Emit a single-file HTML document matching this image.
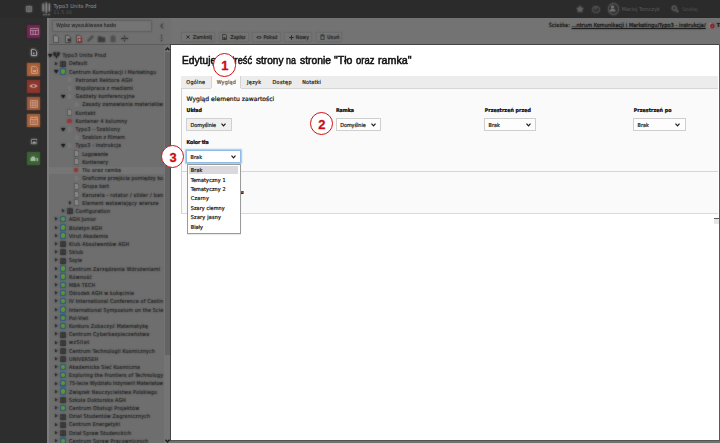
<!DOCTYPE html>
<html lang="pl"><head><meta charset="utf-8"><title>TYPO3 - Tło oraz ramka</title>
<style>
html,body{margin:0;padding:0}
body{width:720px;height:443px;overflow:hidden;position:relative;background:#717171;font-family:"DejaVu Sans","Liberation Sans",sans-serif;font-size:6px;color:#222}
.abs{position:absolute}
.t{position:absolute;white-space:nowrap;-webkit-text-stroke:.24px currentColor}
.t.b0{-webkit-text-stroke:.1px currentColor;text-shadow:0 0 1.700px rgba(20,20,20,.6)}
.t.b1{text-shadow:0 0 1.700px currentColor;-webkit-text-stroke:.08px currentColor;opacity:.85}
.t.b1.tb{text-shadow:0 0 1.700px rgba(120,120,120,.3);-webkit-text-stroke:0;opacity:1}
.lay{position:absolute;left:0;top:0;width:720px;height:443px}
.t.tr{color:rgba(36,36,36,.55) !important;text-shadow:0 0 1.700px rgba(36,36,36,.95);-webkit-text-stroke:.18px rgba(36,36,36,.55)}
.blurI{filter:blur(.85px)}
.circ{position:absolute;border-radius:50%;border-style:solid;border-color:#d10f14;background:#fff}
.sel{position:absolute;background:#efefef;border:1px solid #d0d0d0;border-radius:.5px}
.sel.wh{background:#fdfdfd;border-color:#cfcfcf}
.sel.foc{background:#fff;border-color:#8fbde8;box-shadow:0 0 1.5px .4px rgba(120,175,225,.7)}
.btn{position:absolute;background:#757575;border:1px solid #6a6a6a;border-radius:.5px}
</style></head><body>
<!-- top bar -->
<div class="abs" style="left:0;top:0;width:720px;height:17.8px;background:#2b2b2b"></div>
<!-- module sidebar -->
<div class="abs" style="left:0;top:17.8px;width:47.4px;height:426px;background:#2e2e2e"></div>
<!-- tree header + body -->
<div class="abs" style="left:47.4px;top:17.8px;width:123.4px;height:26.4px;background:#707070"></div>
<div class="abs" style="left:47.4px;top:44.2px;width:123.4px;height:399px;background:#6e6e6e;border-top:.6px solid #5c5c5c"></div>
<div class="abs" style="left:47.400px;top:17.800px;width:1.600px;height:426px;background:#7d7d7d"></div>
<div class="abs" style="left:49px;top:166.600px;width:115px;height:7.800px;background:#757575"></div>
<!-- tree scrollbar -->
<div class="abs" style="left:164px;top:44.6px;width:6.4px;height:399px;background:#747474"></div>
<div class="abs" style="left:164.5px;top:52px;width:5.2px;height:303.300px;background:#636363"></div>
<svg class="abs" style="left:165px;top:46.5px" width="5" height="4" viewBox="0 0 5 4"><path d="M.5 3.2L2.5 1 4.5 3.2" stroke="#1a1a1a" stroke-width="1.300" fill="none"/></svg>
<svg class="abs" style="left:164.600px;top:439px" width="5" height="4" viewBox="0 0 5 4"><path d="M.5 .8L2.5 3 4.5 .8" stroke="#1a1a1a" stroke-width="1.300" fill="none"/></svg>
<!-- doc header -->
<div class="abs" style="left:170.8px;top:17.8px;width:550px;height:27px;background:#737373"></div>

<div class="lay blurI">
<!-- topbar content -->
<svg class="abs" style="left:26px;top:6px" width="6" height="6" viewBox="0 0 6 6"><path d="M.4 .4h5.200v5.200H.4zM2.100 .4v5.200M3.900 .4v5.200" stroke="#8c8c8c" stroke-width=".8" fill="#4a4a4a"/></svg>
<svg class="abs" style="left:41.5px;top:2px" width="9" height="14.500" viewBox="0 0 9 14.500"><path d="M1.100 1.600v8M4.200 .5v10.200M7.300 1.600v8" stroke="#a0a0a0" stroke-width="1.100"/><path d="M2.600 2.500v6.500M5.800 2.500v6.500" stroke="#555" stroke-width=".7"/><path d="M1 12.700h1.600M3.500 12.700h1.600M6 12.700h1.800" stroke="#777" stroke-width="1.300"/></svg>
<svg class="abs" style="left:576px;top:4.8px" width="8" height="8" viewBox="0 0 8 8"><path d="M4 .3l1.1 2.5 2.7.3-2 1.8.6 2.7L4 6.2 1.600 7.600l.6-2.700-2-1.800 2.700-.3z" fill="#646464"/></svg>
<div class="abs" style="left:592.4px;top:5.5px;width:5.6px;height:5.6px;border-radius:50%;border:.6px solid #5a5a5a"></div>
<div class="t" style="left:594.2px;top:5.6px;font-size:4.6px;line-height:6px;color:#5a5a5a;font-weight:bold">?</div>
<div class="abs" style="left:607.8px;top:3.4px;width:9.6px;height:9.6px;border-radius:50%;border:.6px solid #606060;background:#333"></div>
<svg class="abs" style="left:609.4px;top:5px" width="7" height="7" viewBox="0 0 7 7"><circle cx="3.500" cy="2" r="1.700" fill="#777"/><path d="M.4 6.600c0-2 1.400-2.600 3.100-2.600s3.100.6 3.100 2.600z" fill="#777"/></svg>
<svg class="abs" style="left:671px;top:5px" width="8" height="8" viewBox="0 0 8 8"><circle cx="3.200" cy="3.200" r="2.200" stroke="#6a6a6a" stroke-width="1" fill="none"/><path d="M4.900 4.900L7.200 7.200" stroke="#6a6a6a" stroke-width="1.200"/></svg>
<!-- module icons -->
<div class="abs" style="left:27.3px;top:24.7px;width:12.6px;height:13px;background:#702850;box-shadow:0 0 2px rgba(0,0,0,.35)"></div>
<svg class="abs" style="left:29.5px;top:27.5px" width="9" height="8" viewBox="0 0 9 8"><path d="M.5 .5h8v6h-8zM.5 2.500h8M3 2.500v4M5.500 2.500v4" stroke="#b88ca5" stroke-width=".9" fill="none"/></svg>
<svg class="abs" style="left:30.6px;top:49.4px" width="6" height="7" viewBox="0 0 6 7"><path d="M.5 .5h3.200l1.800 1.800v4.200h-5z" fill="#2c2c2c" stroke="#c6c6c6" stroke-width=".9"/><path d="M2 3.600h1.400v1.600H2z" fill="#bbb"/></svg>
<div class="abs" style="left:27.3px;top:63px;width:12.6px;height:13px;background:#aa623a;box-shadow:0 0 2px rgba(0,0,0,.35)"></div>
<svg class="abs" style="left:30.5px;top:65.5px" width="7" height="8" viewBox="0 0 7 8"><path d="M.6 .6h4l1.800 1.800v5h-5.800z" fill="none" stroke="#cfa68e" stroke-width="1"/><path d="M2 4h3v2H2z" fill="#cfa68e"/></svg>
<div class="abs" style="left:27.3px;top:80px;width:12.6px;height:13px;background:#8d362d;box-shadow:0 0 2px rgba(0,0,0,.35)"></div>
<svg class="abs" style="left:29.4px;top:83.4px" width="9" height="6" viewBox="0 0 9 6"><path d="M.4 3C2 .6 7 .6 8.600 3 7 5.400 2 5.400.4 3z" fill="#cdaaa6"/><circle cx="4.500" cy="3" r="1.300" fill="#8d362d"/></svg>
<div class="abs" style="left:27.3px;top:97px;width:12.6px;height:13px;background:#a05b3d;box-shadow:0 0 2px rgba(0,0,0,.35)"></div>
<svg class="abs" style="left:30px;top:99.5px" width="8" height="8" viewBox="0 0 8 8"><path d="M.5 .5h7v7h-7zM.5 2.800h7M.5 5.200h7M2.800 .5v7M5.200 .5v7" stroke="#cfa68e" stroke-width=".8" fill="none"/></svg>
<div class="abs" style="left:27.3px;top:113.8px;width:12.6px;height:13px;background:#aa623a;box-shadow:0 0 2px rgba(0,0,0,.35)"></div>
<svg class="abs" style="left:30px;top:116px" width="8" height="9" viewBox="0 0 8 9"><path d="M.5 1.500h7v7h-7zM.5 3.500h7M2 .2v2M6 .2v2" stroke="#cfa68e" stroke-width=".9" fill="none"/><path d="M2 5h4M2 6.800h4" stroke="#cfa68e" stroke-width=".7"/></svg>
<svg class="abs" style="left:30.600px;top:138.600px" width="6.400" height="5.600" viewBox="0 0 6.400 5.600"><path d="M.4 .5h5.600v4.600H.4z" fill="#222" stroke="#b4b4b4" stroke-width=".8"/><path d="M1 4.600c.6-1.600 1.400-2 2.200-2s1.600.4 2.200 2z" fill="#bdbdbd"/></svg>
<div class="abs" style="left:27.3px;top:152px;width:12.6px;height:13px;background:#3d6236;box-shadow:0 0 2px rgba(0,0,0,.35)"></div>
<svg class="abs" style="left:29.8px;top:155.400px" width="9" height="7" viewBox="0 0 9 7"><path d="M.5 6V3.500L2 1.500h2.500l1 2V6z" fill="#a9bfa5"/><path d="M6.500 3h1.500v3H6.500z" fill="#a9bfa5"/></svg>
<!-- tree header -->
<div class="abs" style="left:52.2px;top:20px;width:97.6px;height:10.200px;background:#747474;border:.6px solid #5e5e5e;border-radius:1px"></div>
<svg class="abs" style="left:159.6px;top:23px" width="4" height="6" viewBox="0 0 4 6"><path d="M3 .6L.8 3 3 5.400" stroke="#2a2a2a" stroke-width=".9" fill="none"/></svg>
<svg class="abs" style="left:53px;top:34.800px" width="6" height="8" viewBox="0 0 6 8"><path d="M.5 .5h3.200l1.800 1.800v5.200h-5z" fill="#8a8a8a" stroke="#3c3c3c" stroke-width=".7"/></svg>
<svg class="abs" style="left:64.8px;top:34.800px" width="6" height="8" viewBox="0 0 6 8"><path d="M.5 .5h3.200l1.800 1.800v5.200h-5z" fill="#8a8a8a" stroke="#333" stroke-width=".7"/><path d="M2.500 3.500h3v3h-3z" fill="#2e2e2e"/></svg>
<svg class="abs" style="left:76.400px;top:34.800px" width="6" height="8" viewBox="0 0 6 8"><path d="M.5 .5h3.200l1.800 1.800v5.200h-5z" fill="#8a8a8a" stroke="#333" stroke-width=".7"/><path d="M1.800 3h3.700v4h-3.700z" fill="#942020"/><path d="M3.650 3.800v2.400M2.450 5h2.400" stroke="#ddd" stroke-width=".7"/></svg>
<svg class="abs" style="left:86.800px;top:35.400px" width="7" height="7" viewBox="0 0 7 7"><path d="M1.400 5.600L3 4M4 3L5.600 1.400" stroke="#484848" stroke-width="1.900" stroke-linecap="round"/><path d="M2.600 4.400L4.400 2.600" stroke="#484848" stroke-width=".8"/></svg>
<svg class="abs" style="left:98px;top:35.600px" width="7" height="6" viewBox="0 0 7 6"><path d="M0 .5h3l.6 1H7V6H0z" fill="#3c3c3c"/></svg>
<svg class="abs" style="left:110.400px;top:35px" width="6" height="7" viewBox="0 0 6 7"><path d="M.3 1.500h5.400M2 .5h2M1 2h4v5H1z" fill="#505050" stroke="#505050" stroke-width=".6"/></svg>
<svg class="abs" style="left:121.400px;top:35px" width="7" height="7" viewBox="0 0 7 7"><path d="M0 3.500h7" stroke="#2a2a2a" stroke-width="1"/><path d="M3.500 .5v1.500M3.500 5v1.500" stroke="#2a2a2a" stroke-width=".9"/></svg>
<div class="abs" style="left:160.800px;top:35px;width:1.100px;height:1.100px;background:#222;box-shadow:0 2.600px 0 #222,0 5.200px 0 #222"></div>
</div>
<div class="lay" style="opacity:.6">
<!-- topbar content -->
<svg class="abs" style="left:26px;top:6px" width="6" height="6" viewBox="0 0 6 6"><path d="M.4 .4h5.200v5.200H.4zM2.100 .4v5.200M3.900 .4v5.200" stroke="#8c8c8c" stroke-width=".8" fill="#4a4a4a"/></svg>
<svg class="abs" style="left:41.5px;top:2px" width="9" height="14.500" viewBox="0 0 9 14.500"><path d="M1.100 1.600v8M4.200 .5v10.200M7.300 1.600v8" stroke="#a0a0a0" stroke-width="1.100"/><path d="M2.600 2.500v6.500M5.800 2.500v6.500" stroke="#555" stroke-width=".7"/><path d="M1 12.700h1.600M3.500 12.700h1.600M6 12.700h1.800" stroke="#777" stroke-width="1.300"/></svg>
<svg class="abs" style="left:576px;top:4.8px" width="8" height="8" viewBox="0 0 8 8"><path d="M4 .3l1.1 2.5 2.7.3-2 1.8.6 2.7L4 6.2 1.600 7.600l.6-2.700-2-1.800 2.700-.3z" fill="#646464"/></svg>
<div class="abs" style="left:592.4px;top:5.5px;width:5.6px;height:5.6px;border-radius:50%;border:.6px solid #5a5a5a"></div>
<div class="t" style="left:594.2px;top:5.6px;font-size:4.6px;line-height:6px;color:#5a5a5a;font-weight:bold">?</div>
<div class="abs" style="left:607.8px;top:3.4px;width:9.6px;height:9.6px;border-radius:50%;border:.6px solid #606060;background:#333"></div>
<svg class="abs" style="left:609.4px;top:5px" width="7" height="7" viewBox="0 0 7 7"><circle cx="3.500" cy="2" r="1.700" fill="#777"/><path d="M.4 6.600c0-2 1.400-2.600 3.100-2.600s3.100.6 3.100 2.600z" fill="#777"/></svg>
<svg class="abs" style="left:671px;top:5px" width="8" height="8" viewBox="0 0 8 8"><circle cx="3.200" cy="3.200" r="2.200" stroke="#6a6a6a" stroke-width="1" fill="none"/><path d="M4.900 4.900L7.200 7.200" stroke="#6a6a6a" stroke-width="1.200"/></svg>
<!-- module icons -->
<div class="abs" style="left:27.3px;top:24.7px;width:12.6px;height:13px;background:#702850;box-shadow:0 0 2px rgba(0,0,0,.35)"></div>
<svg class="abs" style="left:29.5px;top:27.5px" width="9" height="8" viewBox="0 0 9 8"><path d="M.5 .5h8v6h-8zM.5 2.500h8M3 2.500v4M5.500 2.500v4" stroke="#b88ca5" stroke-width=".9" fill="none"/></svg>
<svg class="abs" style="left:30.6px;top:49.4px" width="6" height="7" viewBox="0 0 6 7"><path d="M.5 .5h3.200l1.800 1.800v4.200h-5z" fill="#2c2c2c" stroke="#c6c6c6" stroke-width=".9"/><path d="M2 3.600h1.400v1.600H2z" fill="#bbb"/></svg>
<div class="abs" style="left:27.3px;top:63px;width:12.6px;height:13px;background:#aa623a;box-shadow:0 0 2px rgba(0,0,0,.35)"></div>
<svg class="abs" style="left:30.5px;top:65.5px" width="7" height="8" viewBox="0 0 7 8"><path d="M.6 .6h4l1.800 1.800v5h-5.800z" fill="none" stroke="#cfa68e" stroke-width="1"/><path d="M2 4h3v2H2z" fill="#cfa68e"/></svg>
<div class="abs" style="left:27.3px;top:80px;width:12.6px;height:13px;background:#8d362d;box-shadow:0 0 2px rgba(0,0,0,.35)"></div>
<svg class="abs" style="left:29.4px;top:83.4px" width="9" height="6" viewBox="0 0 9 6"><path d="M.4 3C2 .6 7 .6 8.600 3 7 5.400 2 5.400.4 3z" fill="#cdaaa6"/><circle cx="4.500" cy="3" r="1.300" fill="#8d362d"/></svg>
<div class="abs" style="left:27.3px;top:97px;width:12.6px;height:13px;background:#a05b3d;box-shadow:0 0 2px rgba(0,0,0,.35)"></div>
<svg class="abs" style="left:30px;top:99.5px" width="8" height="8" viewBox="0 0 8 8"><path d="M.5 .5h7v7h-7zM.5 2.800h7M.5 5.200h7M2.800 .5v7M5.200 .5v7" stroke="#cfa68e" stroke-width=".8" fill="none"/></svg>
<div class="abs" style="left:27.3px;top:113.8px;width:12.6px;height:13px;background:#aa623a;box-shadow:0 0 2px rgba(0,0,0,.35)"></div>
<svg class="abs" style="left:30px;top:116px" width="8" height="9" viewBox="0 0 8 9"><path d="M.5 1.500h7v7h-7zM.5 3.500h7M2 .2v2M6 .2v2" stroke="#cfa68e" stroke-width=".9" fill="none"/><path d="M2 5h4M2 6.800h4" stroke="#cfa68e" stroke-width=".7"/></svg>
<svg class="abs" style="left:30.600px;top:138.600px" width="6.400" height="5.600" viewBox="0 0 6.400 5.600"><path d="M.4 .5h5.600v4.600H.4z" fill="#222" stroke="#b4b4b4" stroke-width=".8"/><path d="M1 4.600c.6-1.600 1.400-2 2.200-2s1.600.4 2.200 2z" fill="#bdbdbd"/></svg>
<div class="abs" style="left:27.3px;top:152px;width:12.6px;height:13px;background:#3d6236;box-shadow:0 0 2px rgba(0,0,0,.35)"></div>
<svg class="abs" style="left:29.8px;top:155.400px" width="9" height="7" viewBox="0 0 9 7"><path d="M.5 6V3.500L2 1.500h2.500l1 2V6z" fill="#a9bfa5"/><path d="M6.500 3h1.500v3H6.500z" fill="#a9bfa5"/></svg>
<!-- tree header -->
<div class="abs" style="left:52.2px;top:20px;width:97.6px;height:10.200px;background:#747474;border:.6px solid #5e5e5e;border-radius:1px"></div>
<svg class="abs" style="left:159.6px;top:23px" width="4" height="6" viewBox="0 0 4 6"><path d="M3 .6L.8 3 3 5.400" stroke="#2a2a2a" stroke-width=".9" fill="none"/></svg>
<svg class="abs" style="left:53px;top:34.800px" width="6" height="8" viewBox="0 0 6 8"><path d="M.5 .5h3.200l1.800 1.800v5.200h-5z" fill="#8a8a8a" stroke="#3c3c3c" stroke-width=".7"/></svg>
<svg class="abs" style="left:64.8px;top:34.800px" width="6" height="8" viewBox="0 0 6 8"><path d="M.5 .5h3.200l1.800 1.800v5.200h-5z" fill="#8a8a8a" stroke="#333" stroke-width=".7"/><path d="M2.500 3.500h3v3h-3z" fill="#2e2e2e"/></svg>
<svg class="abs" style="left:76.400px;top:34.800px" width="6" height="8" viewBox="0 0 6 8"><path d="M.5 .5h3.200l1.800 1.800v5.200h-5z" fill="#8a8a8a" stroke="#333" stroke-width=".7"/><path d="M1.800 3h3.700v4h-3.700z" fill="#942020"/><path d="M3.650 3.800v2.400M2.450 5h2.400" stroke="#ddd" stroke-width=".7"/></svg>
<svg class="abs" style="left:86.800px;top:35.400px" width="7" height="7" viewBox="0 0 7 7"><path d="M1.400 5.600L3 4M4 3L5.600 1.400" stroke="#484848" stroke-width="1.900" stroke-linecap="round"/><path d="M2.600 4.400L4.400 2.600" stroke="#484848" stroke-width=".8"/></svg>
<svg class="abs" style="left:98px;top:35.600px" width="7" height="6" viewBox="0 0 7 6"><path d="M0 .5h3l.6 1H7V6H0z" fill="#3c3c3c"/></svg>
<svg class="abs" style="left:110.400px;top:35px" width="6" height="7" viewBox="0 0 6 7"><path d="M.3 1.500h5.400M2 .5h2M1 2h4v5H1z" fill="#505050" stroke="#505050" stroke-width=".6"/></svg>
<svg class="abs" style="left:121.400px;top:35px" width="7" height="7" viewBox="0 0 7 7"><path d="M0 3.500h7" stroke="#2a2a2a" stroke-width="1"/><path d="M3.500 .5v1.500M3.500 5v1.500" stroke="#2a2a2a" stroke-width=".9"/></svg>
<div class="abs" style="left:160.800px;top:35px;width:1.100px;height:1.100px;background:#222;box-shadow:0 2.600px 0 #222,0 5.200px 0 #222"></div>
</div>
<div class="lay">
<div class="t b1" style='left:56.3px;top:22.00px;font-size:5.2px;line-height:6.76px;letter-spacing:-0.01px;color:#2a2a2a;font-family:"DejaVu Sans Condensed","DejaVu Sans","Liberation Sans",sans-serif;'>Wpisz wyszukiwane hasło</div>
<div class="t b1 tb" style='left:53.5px;top:2.80px;font-size:5.5px;line-height:7.15px;letter-spacing:0.12px;color:#8c8c8c;font-family:"DejaVu Sans Condensed","DejaVu Sans","Liberation Sans",sans-serif;'>Typo3 Units Prod</div>
<div class="t b1 tb" style='left:53.5px;top:8.50px;font-size:5.2px;line-height:6.76px;letter-spacing:0.10px;color:#4c4c4c;font-family:"DejaVu Sans Condensed","DejaVu Sans","Liberation Sans",sans-serif;'>11.5.30</div>
<div class="t b1 tb" style='left:621.7px;top:5.70px;font-size:5.5px;line-height:7.15px;letter-spacing:-0.01px;color:#525252;font-family:"DejaVu Sans Condensed","DejaVu Sans","Liberation Sans",sans-serif;'>Maciej Tomczyk</div>
<div class="t b1 tb" style='left:682.0px;top:5.70px;font-size:5.5px;line-height:7.15px;letter-spacing:-0.11px;color:#454545;font-family:"DejaVu Sans Condensed","DejaVu Sans","Liberation Sans",sans-serif;'>Szukaj</div>
</div>

<div class="lay blurI">
<svg class="abs" style="left:47.8px;top:53.7px" width="4.4" height="3.6" viewBox="0 0 4.4 3.6"><path d="M0 0h4.4L2.2 3.6z" fill="#1a1a1a"/></svg>
<svg class="abs" style="left:52.8px;top:51.8px" width="7" height="7" viewBox="0 0 7 7"><path d="M.8 .8h1.800v1.800H.8zM4.400 .8h1.800v1.800H4.400zM1.700 2.600v1.400h1.800V6.200M5.300 2.600v1.400H3.500" stroke="#222" stroke-width="1" fill="none"/></svg>
<svg class="abs" style="left:55.4px;top:61.5px" width="2.700" height="3.600" viewBox="0 0 3 4"><path d="M0 0v4L3 2z" fill="#2c2c2c"/></svg>
<svg class="abs" style="left:59.9px;top:60.7px" width="6" height="6" viewBox="0 0 6 6"><path d="M.3 .8h5.400M.8 1v4.500M2.400 1v4.500M4 1v4.500M5.300 1v4.500M.3 5.300h5.400" stroke="#2c2c2c" stroke-width=".9" fill="none"/></svg>
<svg class="abs" style="left:54.4px;top:70.1px" width="4.4" height="3.6" viewBox="0 0 4.4 3.6"><path d="M0 0h4.4L2.2 3.6z" fill="#1a1a1a"/></svg>
<div class="abs" style="left:59.6px;top:68.2px;width:6.6px;height:6.6px;border-radius:1.6px;background:#3a5a7c"></div><div class="abs" style="left:60.7px;top:69.3px;width:4.4px;height:4.4px;border-radius:50%;background:#5c9a2e"></div>
<svg class="abs" style="left:66.9px;top:76.3px" width="5.2" height="6.8" viewBox="0 0 5.200 6.800"><path d="M.4 .4h2.800l1.600 1.600v4.400H.4z" fill="#767676" stroke="#676767" stroke-width=".4"/></svg>
<svg class="abs" style="left:66.9px;top:84.5px" width="5.2" height="6.8" viewBox="0 0 5.200 6.800"><path d="M.4 .4h2.800l1.600 1.600v4.400H.4z" fill="#767676" stroke="#676767" stroke-width=".4"/></svg>
<svg class="abs" style="left:61.0px;top:94.7px" width="4.4" height="3.6" viewBox="0 0 4.4 3.6"><path d="M0 0h4.4L2.2 3.6z" fill="#1a1a1a"/></svg>
<svg class="abs" style="left:66.9px;top:92.7px" width="5.2" height="6.8" viewBox="0 0 5.200 6.800"><path d="M.4 .4h2.800l1.600 1.600v4.400H.4z" fill="#767676" stroke="#676767" stroke-width=".4"/></svg>
<svg class="abs" style="left:73.5px;top:100.9px" width="5.2" height="6.8" viewBox="0 0 5.200 6.800"><path d="M.4 .4h2.800l1.600 1.600v4.400H.4z" fill="#767676" stroke="#676767" stroke-width=".4"/></svg>
<svg class="abs" style="left:66.9px;top:109.1px" width="5.2" height="6.8" viewBox="0 0 5.200 6.800"><path d="M.4 .4h2.800l1.600 1.600v4.400H.4z" fill="#868686" stroke="#444" stroke-width=".6"/></svg>
<div class="abs" style="left:67.2px;top:118.8px;width:4.4px;height:4.4px;border-radius:50%;background:#943636"></div>
<svg class="abs" style="left:61.0px;top:127.5px" width="4.4" height="3.6" viewBox="0 0 4.4 3.6"><path d="M0 0h4.4L2.2 3.6z" fill="#1a1a1a"/></svg>
<svg class="abs" style="left:66.9px;top:125.5px" width="5.2" height="6.8" viewBox="0 0 5.200 6.800"><path d="M.4 .4h2.800l1.600 1.600v4.400H.4z" fill="#767676" stroke="#676767" stroke-width=".4"/></svg>
<svg class="abs" style="left:73.5px;top:133.8px" width="5.2" height="6.8" viewBox="0 0 5.200 6.800"><path d="M.4 .4h2.800l1.600 1.600v4.400H.4z" fill="#767676" stroke="#676767" stroke-width=".4"/></svg>
<svg class="abs" style="left:61.0px;top:144.0px" width="4.4" height="3.6" viewBox="0 0 4.4 3.6"><path d="M0 0h4.4L2.2 3.6z" fill="#1a1a1a"/></svg>
<svg class="abs" style="left:66.9px;top:142.0px" width="5.2" height="6.8" viewBox="0 0 5.200 6.800"><path d="M.4 .4h2.800l1.600 1.600v4.400H.4z" fill="#767676" stroke="#676767" stroke-width=".4"/></svg>
<svg class="abs" style="left:73.5px;top:150.2px" width="5.2" height="6.8" viewBox="0 0 5.200 6.800"><path d="M.4 .4h2.800l1.600 1.600v4.400H.4z" fill="#868686" stroke="#444" stroke-width=".6"/></svg>
<svg class="abs" style="left:73.5px;top:158.4px" width="5.2" height="6.8" viewBox="0 0 5.200 6.800"><path d="M.4 .4h2.800l1.600 1.600v4.400H.4z" fill="#868686" stroke="#444" stroke-width=".6"/></svg>
<div class="abs" style="left:73.8px;top:168.1px;width:4.4px;height:4.4px;border-radius:50%;background:#943636"></div>
<svg class="abs" style="left:73.5px;top:174.8px" width="5.2" height="6.8" viewBox="0 0 5.200 6.800"><path d="M.4 .4h2.800l1.600 1.600v4.400H.4z" fill="#767676" stroke="#676767" stroke-width=".4"/></svg>
<svg class="abs" style="left:73.5px;top:183.0px" width="5.2" height="6.8" viewBox="0 0 5.200 6.800"><path d="M.4 .4h2.800l1.600 1.600v4.400H.4z" fill="#868686" stroke="#444" stroke-width=".6"/></svg>
<svg class="abs" style="left:73.5px;top:191.2px" width="5.2" height="6.8" viewBox="0 0 5.200 6.800"><path d="M.4 .4h2.800l1.600 1.600v4.400H.4z" fill="#868686" stroke="#444" stroke-width=".6"/></svg>
<svg class="abs" style="left:68.6px;top:201.0px" width="2.700" height="3.600" viewBox="0 0 3 4"><path d="M0 0v4L3 2z" fill="#2c2c2c"/></svg>
<svg class="abs" style="left:73.5px;top:199.4px" width="5.2" height="6.8" viewBox="0 0 5.200 6.800"><path d="M.4 .4h2.800l1.600 1.600v4.400H.4z" fill="#868686" stroke="#444" stroke-width=".6"/></svg>
<svg class="abs" style="left:62.0px;top:209.2px" width="2.700" height="3.600" viewBox="0 0 3 4"><path d="M0 0v4L3 2z" fill="#2c2c2c"/></svg>
<svg class="abs" style="left:66.5px;top:208.4px" width="6" height="6" viewBox="0 0 6 6"><path d="M.3 .8h5.400M.8 1v4.500M2.400 1v4.500M4 1v4.500M5.300 1v4.500M.3 5.300h5.400" stroke="#2c2c2c" stroke-width=".9" fill="none"/></svg>
<svg class="abs" style="left:55.4px;top:217.4px" width="2.700" height="3.600" viewBox="0 0 3 4"><path d="M0 0v4L3 2z" fill="#2c2c2c"/></svg>
<div class="abs" style="left:59.6px;top:215.9px;width:6.6px;height:6.6px;border-radius:1.6px;background:#3a5a7c"></div><div class="abs" style="left:60.7px;top:217.0px;width:4.4px;height:4.4px;border-radius:50%;background:#5c9a2e"></div>
<svg class="abs" style="left:55.4px;top:225.6px" width="2.700" height="3.600" viewBox="0 0 3 4"><path d="M0 0v4L3 2z" fill="#2c2c2c"/></svg>
<div class="abs" style="left:59.6px;top:224.1px;width:6.6px;height:6.6px;border-radius:1.6px;background:#3a5a7c"></div><div class="abs" style="left:60.7px;top:225.2px;width:4.4px;height:4.4px;border-radius:50%;background:#5c9a2e"></div>
<svg class="abs" style="left:55.4px;top:233.8px" width="2.700" height="3.600" viewBox="0 0 3 4"><path d="M0 0v4L3 2z" fill="#2c2c2c"/></svg>
<div class="abs" style="left:59.6px;top:232.3px;width:6.6px;height:6.6px;border-radius:1.6px;background:#3a5a7c"></div><div class="abs" style="left:60.7px;top:233.4px;width:4.4px;height:4.4px;border-radius:50%;background:#5c9a2e"></div>
<svg class="abs" style="left:55.4px;top:242.0px" width="2.700" height="3.600" viewBox="0 0 3 4"><path d="M0 0v4L3 2z" fill="#2c2c2c"/></svg>
<svg class="abs" style="left:59.9px;top:241.2px" width="6" height="6" viewBox="0 0 6 6"><path d="M.3 .8h5.400M.8 1v4.500M2.400 1v4.500M4 1v4.500M5.300 1v4.500M.3 5.300h5.400" stroke="#2c2c2c" stroke-width=".9" fill="none"/></svg>
<svg class="abs" style="left:55.4px;top:250.2px" width="2.700" height="3.600" viewBox="0 0 3 4"><path d="M0 0v4L3 2z" fill="#2c2c2c"/></svg>
<svg class="abs" style="left:59.9px;top:249.4px" width="6" height="6" viewBox="0 0 6 6"><path d="M.3 .8h5.400M.8 1v4.500M2.400 1v4.500M4 1v4.500M5.300 1v4.500M.3 5.300h5.400" stroke="#2c2c2c" stroke-width=".9" fill="none"/></svg>
<svg class="abs" style="left:55.4px;top:258.4px" width="2.700" height="3.600" viewBox="0 0 3 4"><path d="M0 0v4L3 2z" fill="#2c2c2c"/></svg>
<svg class="abs" style="left:59.9px;top:257.6px" width="6" height="6" viewBox="0 0 6 6"><path d="M.3 .8h5.400M.8 1v4.500M2.400 1v4.500M4 1v4.500M5.300 1v4.500M.3 5.300h5.400" stroke="#2c2c2c" stroke-width=".9" fill="none"/></svg>
<svg class="abs" style="left:55.4px;top:266.6px" width="2.700" height="3.600" viewBox="0 0 3 4"><path d="M0 0v4L3 2z" fill="#2c2c2c"/></svg>
<div class="abs" style="left:59.6px;top:265.1px;width:6.6px;height:6.6px;border-radius:1.6px;background:#3a5a7c"></div><div class="abs" style="left:60.7px;top:266.2px;width:4.4px;height:4.4px;border-radius:50%;background:#5c9a2e"></div>
<svg class="abs" style="left:55.4px;top:274.8px" width="2.700" height="3.600" viewBox="0 0 3 4"><path d="M0 0v4L3 2z" fill="#2c2c2c"/></svg>
<div class="abs" style="left:59.6px;top:273.3px;width:6.6px;height:6.6px;border-radius:1.6px;background:#3a5a7c"></div><div class="abs" style="left:60.7px;top:274.4px;width:4.4px;height:4.4px;border-radius:50%;background:#5c9a2e"></div>
<svg class="abs" style="left:55.4px;top:283.0px" width="2.700" height="3.600" viewBox="0 0 3 4"><path d="M0 0v4L3 2z" fill="#2c2c2c"/></svg>
<div class="abs" style="left:59.6px;top:281.5px;width:6.6px;height:6.6px;border-radius:1.6px;background:#3a5a7c"></div><div class="abs" style="left:60.7px;top:282.6px;width:4.4px;height:4.4px;border-radius:50%;background:#5c9a2e"></div>
<svg class="abs" style="left:55.4px;top:291.2px" width="2.700" height="3.600" viewBox="0 0 3 4"><path d="M0 0v4L3 2z" fill="#2c2c2c"/></svg>
<div class="abs" style="left:59.6px;top:289.7px;width:6.6px;height:6.6px;border-radius:1.6px;background:#3a5a7c"></div><div class="abs" style="left:60.7px;top:290.8px;width:4.4px;height:4.4px;border-radius:50%;background:#5c9a2e"></div>
<svg class="abs" style="left:55.4px;top:299.4px" width="2.700" height="3.600" viewBox="0 0 3 4"><path d="M0 0v4L3 2z" fill="#2c2c2c"/></svg>
<div class="abs" style="left:59.6px;top:297.9px;width:6.6px;height:6.6px;border-radius:1.6px;background:#3a5a7c"></div><div class="abs" style="left:60.7px;top:299.1px;width:4.4px;height:4.4px;border-radius:50%;background:#5c9a2e"></div>
<svg class="abs" style="left:55.4px;top:307.7px" width="2.700" height="3.600" viewBox="0 0 3 4"><path d="M0 0v4L3 2z" fill="#2c2c2c"/></svg>
<div class="abs" style="left:59.6px;top:306.2px;width:6.6px;height:6.6px;border-radius:1.6px;background:#3a5a7c"></div><div class="abs" style="left:60.7px;top:307.3px;width:4.4px;height:4.4px;border-radius:50%;background:#5c9a2e"></div>
<svg class="abs" style="left:55.4px;top:315.9px" width="2.700" height="3.600" viewBox="0 0 3 4"><path d="M0 0v4L3 2z" fill="#2c2c2c"/></svg>
<div class="abs" style="left:59.6px;top:314.4px;width:6.6px;height:6.6px;border-radius:1.6px;background:#3a5a7c"></div><div class="abs" style="left:60.7px;top:315.5px;width:4.4px;height:4.4px;border-radius:50%;background:#5c9a2e"></div>
<svg class="abs" style="left:55.4px;top:324.1px" width="2.700" height="3.600" viewBox="0 0 3 4"><path d="M0 0v4L3 2z" fill="#2c2c2c"/></svg>
<div class="abs" style="left:59.6px;top:322.6px;width:6.6px;height:6.6px;border-radius:1.6px;background:#3a5a7c"></div><div class="abs" style="left:60.7px;top:323.7px;width:4.4px;height:4.4px;border-radius:50%;background:#5c9a2e"></div>
<svg class="abs" style="left:55.4px;top:332.3px" width="2.700" height="3.600" viewBox="0 0 3 4"><path d="M0 0v4L3 2z" fill="#2c2c2c"/></svg>
<svg class="abs" style="left:59.9px;top:331.5px" width="6" height="6" viewBox="0 0 6 6"><path d="M.3 .8h5.400M.8 1v4.500M2.400 1v4.500M4 1v4.500M5.300 1v4.500M.3 5.300h5.400" stroke="#2c2c2c" stroke-width=".9" fill="none"/></svg>
<svg class="abs" style="left:55.4px;top:340.5px" width="2.700" height="3.600" viewBox="0 0 3 4"><path d="M0 0v4L3 2z" fill="#2c2c2c"/></svg>
<svg class="abs" style="left:59.9px;top:339.7px" width="6" height="6" viewBox="0 0 6 6"><path d="M.3 .8h5.400M.8 1v4.500M2.400 1v4.500M4 1v4.500M5.300 1v4.500M.3 5.300h5.400" stroke="#2c2c2c" stroke-width=".9" fill="none"/></svg>
<svg class="abs" style="left:55.4px;top:348.7px" width="2.700" height="3.600" viewBox="0 0 3 4"><path d="M0 0v4L3 2z" fill="#2c2c2c"/></svg>
<svg class="abs" style="left:59.9px;top:347.9px" width="6" height="6" viewBox="0 0 6 6"><path d="M.3 .8h5.400M.8 1v4.500M2.400 1v4.500M4 1v4.500M5.300 1v4.500M.3 5.300h5.400" stroke="#2c2c2c" stroke-width=".9" fill="none"/></svg>
<svg class="abs" style="left:55.4px;top:356.9px" width="2.700" height="3.600" viewBox="0 0 3 4"><path d="M0 0v4L3 2z" fill="#2c2c2c"/></svg>
<svg class="abs" style="left:59.9px;top:356.1px" width="6" height="6" viewBox="0 0 6 6"><path d="M.3 .8h5.400M.8 1v4.500M2.400 1v4.500M4 1v4.500M5.300 1v4.500M.3 5.300h5.400" stroke="#2c2c2c" stroke-width=".9" fill="none"/></svg>
<svg class="abs" style="left:55.4px;top:365.1px" width="2.700" height="3.600" viewBox="0 0 3 4"><path d="M0 0v4L3 2z" fill="#2c2c2c"/></svg>
<div class="abs" style="left:59.6px;top:363.6px;width:6.6px;height:6.6px;border-radius:1.6px;background:#3a5a7c"></div><div class="abs" style="left:60.7px;top:364.7px;width:4.4px;height:4.4px;border-radius:50%;background:#5c9a2e"></div>
<svg class="abs" style="left:55.4px;top:373.3px" width="2.700" height="3.600" viewBox="0 0 3 4"><path d="M0 0v4L3 2z" fill="#2c2c2c"/></svg>
<div class="abs" style="left:59.6px;top:371.8px;width:6.6px;height:6.6px;border-radius:1.6px;background:#3a5a7c"></div><div class="abs" style="left:60.7px;top:372.9px;width:4.4px;height:4.4px;border-radius:50%;background:#5c9a2e"></div>
<svg class="abs" style="left:55.4px;top:381.5px" width="2.700" height="3.600" viewBox="0 0 3 4"><path d="M0 0v4L3 2z" fill="#2c2c2c"/></svg>
<div class="abs" style="left:59.6px;top:380.0px;width:6.6px;height:6.6px;border-radius:1.6px;background:#3a5a7c"></div><div class="abs" style="left:60.7px;top:381.1px;width:4.4px;height:4.4px;border-radius:50%;background:#5c9a2e"></div>
<svg class="abs" style="left:55.4px;top:389.7px" width="2.700" height="3.600" viewBox="0 0 3 4"><path d="M0 0v4L3 2z" fill="#2c2c2c"/></svg>
<div class="abs" style="left:59.6px;top:388.2px;width:6.6px;height:6.6px;border-radius:1.6px;background:#3a5a7c"></div><div class="abs" style="left:60.7px;top:389.3px;width:4.4px;height:4.4px;border-radius:50%;background:#5c9a2e"></div>
<svg class="abs" style="left:55.4px;top:397.9px" width="2.700" height="3.600" viewBox="0 0 3 4"><path d="M0 0v4L3 2z" fill="#2c2c2c"/></svg>
<svg class="abs" style="left:59.9px;top:397.1px" width="6" height="6" viewBox="0 0 6 6"><path d="M.3 .8h5.400M.8 1v4.500M2.400 1v4.500M4 1v4.500M5.300 1v4.500M.3 5.300h5.400" stroke="#2c2c2c" stroke-width=".9" fill="none"/></svg>
<svg class="abs" style="left:55.4px;top:406.1px" width="2.700" height="3.600" viewBox="0 0 3 4"><path d="M0 0v4L3 2z" fill="#2c2c2c"/></svg>
<div class="abs" style="left:59.6px;top:404.6px;width:6.6px;height:6.6px;border-radius:1.6px;background:#3a5a7c"></div><div class="abs" style="left:60.7px;top:405.7px;width:4.4px;height:4.4px;border-radius:50%;background:#5c9a2e"></div>
<svg class="abs" style="left:55.4px;top:414.3px" width="2.700" height="3.600" viewBox="0 0 3 4"><path d="M0 0v4L3 2z" fill="#2c2c2c"/></svg>
<svg class="abs" style="left:59.9px;top:413.5px" width="6" height="6" viewBox="0 0 6 6"><path d="M.3 .8h5.400M.8 1v4.500M2.400 1v4.500M4 1v4.500M5.300 1v4.500M.3 5.300h5.400" stroke="#2c2c2c" stroke-width=".9" fill="none"/></svg>
<svg class="abs" style="left:55.4px;top:422.5px" width="2.700" height="3.600" viewBox="0 0 3 4"><path d="M0 0v4L3 2z" fill="#2c2c2c"/></svg>
<svg class="abs" style="left:59.9px;top:421.7px" width="6" height="6" viewBox="0 0 6 6"><path d="M.3 .8h5.400M.8 1v4.500M2.400 1v4.500M4 1v4.500M5.300 1v4.500M.3 5.300h5.400" stroke="#2c2c2c" stroke-width=".9" fill="none"/></svg>
<svg class="abs" style="left:55.4px;top:430.7px" width="2.700" height="3.600" viewBox="0 0 3 4"><path d="M0 0v4L3 2z" fill="#2c2c2c"/></svg>
<svg class="abs" style="left:59.9px;top:429.9px" width="6" height="6" viewBox="0 0 6 6"><path d="M.3 .8h5.400M.8 1v4.500M2.400 1v4.500M4 1v4.500M5.300 1v4.500M.3 5.300h5.400" stroke="#2c2c2c" stroke-width=".9" fill="none"/></svg>
<svg class="abs" style="left:55.4px;top:438.9px" width="2.700" height="3.600" viewBox="0 0 3 4"><path d="M0 0v4L3 2z" fill="#2c2c2c"/></svg>
<div class="abs" style="left:59.6px;top:437.4px;width:6.6px;height:6.6px;border-radius:1.6px;background:#3a5a7c"></div><div class="abs" style="left:60.7px;top:438.5px;width:4.4px;height:4.4px;border-radius:50%;background:#5c9a2e"></div>
</div>
<div class="lay" style="opacity:.8">
<svg class="abs" style="left:47.8px;top:53.7px" width="4.4" height="3.6" viewBox="0 0 4.4 3.6"><path d="M0 0h4.4L2.2 3.6z" fill="#1a1a1a"/></svg>
<svg class="abs" style="left:52.8px;top:51.8px" width="7" height="7" viewBox="0 0 7 7"><path d="M.8 .8h1.800v1.800H.8zM4.400 .8h1.800v1.800H4.400zM1.700 2.600v1.400h1.800V6.200M5.300 2.600v1.400H3.500" stroke="#222" stroke-width="1" fill="none"/></svg>
<svg class="abs" style="left:55.4px;top:61.5px" width="2.700" height="3.600" viewBox="0 0 3 4"><path d="M0 0v4L3 2z" fill="#2c2c2c"/></svg>
<svg class="abs" style="left:59.9px;top:60.7px" width="6" height="6" viewBox="0 0 6 6"><path d="M.3 .8h5.400M.8 1v4.500M2.400 1v4.500M4 1v4.500M5.300 1v4.500M.3 5.300h5.400" stroke="#2c2c2c" stroke-width=".9" fill="none"/></svg>
<svg class="abs" style="left:54.4px;top:70.1px" width="4.4" height="3.6" viewBox="0 0 4.4 3.6"><path d="M0 0h4.4L2.2 3.6z" fill="#1a1a1a"/></svg>
<div class="abs" style="left:59.6px;top:68.2px;width:6.6px;height:6.6px;border-radius:1.6px;background:#3a5a7c"></div><div class="abs" style="left:60.7px;top:69.3px;width:4.4px;height:4.4px;border-radius:50%;background:#5c9a2e"></div>
<svg class="abs" style="left:66.9px;top:76.3px" width="5.2" height="6.8" viewBox="0 0 5.200 6.800"><path d="M.4 .4h2.800l1.600 1.600v4.400H.4z" fill="#767676" stroke="#676767" stroke-width=".4"/></svg>
<svg class="abs" style="left:66.9px;top:84.5px" width="5.2" height="6.8" viewBox="0 0 5.200 6.800"><path d="M.4 .4h2.800l1.600 1.600v4.400H.4z" fill="#767676" stroke="#676767" stroke-width=".4"/></svg>
<svg class="abs" style="left:61.0px;top:94.7px" width="4.4" height="3.6" viewBox="0 0 4.4 3.6"><path d="M0 0h4.4L2.2 3.6z" fill="#1a1a1a"/></svg>
<svg class="abs" style="left:66.9px;top:92.7px" width="5.2" height="6.8" viewBox="0 0 5.200 6.800"><path d="M.4 .4h2.800l1.600 1.600v4.400H.4z" fill="#767676" stroke="#676767" stroke-width=".4"/></svg>
<svg class="abs" style="left:73.5px;top:100.9px" width="5.2" height="6.8" viewBox="0 0 5.200 6.800"><path d="M.4 .4h2.800l1.600 1.600v4.400H.4z" fill="#767676" stroke="#676767" stroke-width=".4"/></svg>
<svg class="abs" style="left:66.9px;top:109.1px" width="5.2" height="6.8" viewBox="0 0 5.200 6.800"><path d="M.4 .4h2.800l1.600 1.600v4.400H.4z" fill="#868686" stroke="#444" stroke-width=".6"/></svg>
<div class="abs" style="left:67.2px;top:118.8px;width:4.4px;height:4.4px;border-radius:50%;background:#943636"></div>
<svg class="abs" style="left:61.0px;top:127.5px" width="4.4" height="3.6" viewBox="0 0 4.4 3.6"><path d="M0 0h4.4L2.2 3.6z" fill="#1a1a1a"/></svg>
<svg class="abs" style="left:66.9px;top:125.5px" width="5.2" height="6.8" viewBox="0 0 5.200 6.800"><path d="M.4 .4h2.800l1.600 1.600v4.400H.4z" fill="#767676" stroke="#676767" stroke-width=".4"/></svg>
<svg class="abs" style="left:73.5px;top:133.8px" width="5.2" height="6.8" viewBox="0 0 5.200 6.800"><path d="M.4 .4h2.800l1.600 1.600v4.400H.4z" fill="#767676" stroke="#676767" stroke-width=".4"/></svg>
<svg class="abs" style="left:61.0px;top:144.0px" width="4.4" height="3.6" viewBox="0 0 4.4 3.6"><path d="M0 0h4.4L2.2 3.6z" fill="#1a1a1a"/></svg>
<svg class="abs" style="left:66.9px;top:142.0px" width="5.2" height="6.8" viewBox="0 0 5.200 6.800"><path d="M.4 .4h2.800l1.600 1.600v4.400H.4z" fill="#767676" stroke="#676767" stroke-width=".4"/></svg>
<svg class="abs" style="left:73.5px;top:150.2px" width="5.2" height="6.8" viewBox="0 0 5.200 6.800"><path d="M.4 .4h2.800l1.600 1.600v4.400H.4z" fill="#868686" stroke="#444" stroke-width=".6"/></svg>
<svg class="abs" style="left:73.5px;top:158.4px" width="5.2" height="6.8" viewBox="0 0 5.200 6.800"><path d="M.4 .4h2.800l1.600 1.600v4.400H.4z" fill="#868686" stroke="#444" stroke-width=".6"/></svg>
<div class="abs" style="left:73.8px;top:168.1px;width:4.4px;height:4.4px;border-radius:50%;background:#943636"></div>
<svg class="abs" style="left:73.5px;top:174.8px" width="5.2" height="6.8" viewBox="0 0 5.200 6.800"><path d="M.4 .4h2.800l1.600 1.600v4.400H.4z" fill="#767676" stroke="#676767" stroke-width=".4"/></svg>
<svg class="abs" style="left:73.5px;top:183.0px" width="5.2" height="6.8" viewBox="0 0 5.200 6.800"><path d="M.4 .4h2.800l1.600 1.600v4.400H.4z" fill="#868686" stroke="#444" stroke-width=".6"/></svg>
<svg class="abs" style="left:73.5px;top:191.2px" width="5.2" height="6.8" viewBox="0 0 5.200 6.800"><path d="M.4 .4h2.800l1.600 1.600v4.400H.4z" fill="#868686" stroke="#444" stroke-width=".6"/></svg>
<svg class="abs" style="left:68.6px;top:201.0px" width="2.700" height="3.600" viewBox="0 0 3 4"><path d="M0 0v4L3 2z" fill="#2c2c2c"/></svg>
<svg class="abs" style="left:73.5px;top:199.4px" width="5.2" height="6.8" viewBox="0 0 5.200 6.800"><path d="M.4 .4h2.800l1.600 1.600v4.400H.4z" fill="#868686" stroke="#444" stroke-width=".6"/></svg>
<svg class="abs" style="left:62.0px;top:209.2px" width="2.700" height="3.600" viewBox="0 0 3 4"><path d="M0 0v4L3 2z" fill="#2c2c2c"/></svg>
<svg class="abs" style="left:66.5px;top:208.4px" width="6" height="6" viewBox="0 0 6 6"><path d="M.3 .8h5.400M.8 1v4.500M2.400 1v4.500M4 1v4.500M5.300 1v4.500M.3 5.300h5.400" stroke="#2c2c2c" stroke-width=".9" fill="none"/></svg>
<svg class="abs" style="left:55.4px;top:217.4px" width="2.700" height="3.600" viewBox="0 0 3 4"><path d="M0 0v4L3 2z" fill="#2c2c2c"/></svg>
<div class="abs" style="left:59.6px;top:215.9px;width:6.6px;height:6.6px;border-radius:1.6px;background:#3a5a7c"></div><div class="abs" style="left:60.7px;top:217.0px;width:4.4px;height:4.4px;border-radius:50%;background:#5c9a2e"></div>
<svg class="abs" style="left:55.4px;top:225.6px" width="2.700" height="3.600" viewBox="0 0 3 4"><path d="M0 0v4L3 2z" fill="#2c2c2c"/></svg>
<div class="abs" style="left:59.6px;top:224.1px;width:6.6px;height:6.6px;border-radius:1.6px;background:#3a5a7c"></div><div class="abs" style="left:60.7px;top:225.2px;width:4.4px;height:4.4px;border-radius:50%;background:#5c9a2e"></div>
<svg class="abs" style="left:55.4px;top:233.8px" width="2.700" height="3.600" viewBox="0 0 3 4"><path d="M0 0v4L3 2z" fill="#2c2c2c"/></svg>
<div class="abs" style="left:59.6px;top:232.3px;width:6.6px;height:6.6px;border-radius:1.6px;background:#3a5a7c"></div><div class="abs" style="left:60.7px;top:233.4px;width:4.4px;height:4.4px;border-radius:50%;background:#5c9a2e"></div>
<svg class="abs" style="left:55.4px;top:242.0px" width="2.700" height="3.600" viewBox="0 0 3 4"><path d="M0 0v4L3 2z" fill="#2c2c2c"/></svg>
<svg class="abs" style="left:59.9px;top:241.2px" width="6" height="6" viewBox="0 0 6 6"><path d="M.3 .8h5.400M.8 1v4.500M2.400 1v4.500M4 1v4.500M5.300 1v4.500M.3 5.300h5.400" stroke="#2c2c2c" stroke-width=".9" fill="none"/></svg>
<svg class="abs" style="left:55.4px;top:250.2px" width="2.700" height="3.600" viewBox="0 0 3 4"><path d="M0 0v4L3 2z" fill="#2c2c2c"/></svg>
<svg class="abs" style="left:59.9px;top:249.4px" width="6" height="6" viewBox="0 0 6 6"><path d="M.3 .8h5.400M.8 1v4.500M2.400 1v4.500M4 1v4.500M5.300 1v4.500M.3 5.300h5.400" stroke="#2c2c2c" stroke-width=".9" fill="none"/></svg>
<svg class="abs" style="left:55.4px;top:258.4px" width="2.700" height="3.600" viewBox="0 0 3 4"><path d="M0 0v4L3 2z" fill="#2c2c2c"/></svg>
<svg class="abs" style="left:59.9px;top:257.6px" width="6" height="6" viewBox="0 0 6 6"><path d="M.3 .8h5.400M.8 1v4.500M2.400 1v4.500M4 1v4.500M5.300 1v4.500M.3 5.300h5.400" stroke="#2c2c2c" stroke-width=".9" fill="none"/></svg>
<svg class="abs" style="left:55.4px;top:266.6px" width="2.700" height="3.600" viewBox="0 0 3 4"><path d="M0 0v4L3 2z" fill="#2c2c2c"/></svg>
<div class="abs" style="left:59.6px;top:265.1px;width:6.6px;height:6.6px;border-radius:1.6px;background:#3a5a7c"></div><div class="abs" style="left:60.7px;top:266.2px;width:4.4px;height:4.4px;border-radius:50%;background:#5c9a2e"></div>
<svg class="abs" style="left:55.4px;top:274.8px" width="2.700" height="3.600" viewBox="0 0 3 4"><path d="M0 0v4L3 2z" fill="#2c2c2c"/></svg>
<div class="abs" style="left:59.6px;top:273.3px;width:6.6px;height:6.6px;border-radius:1.6px;background:#3a5a7c"></div><div class="abs" style="left:60.7px;top:274.4px;width:4.4px;height:4.4px;border-radius:50%;background:#5c9a2e"></div>
<svg class="abs" style="left:55.4px;top:283.0px" width="2.700" height="3.600" viewBox="0 0 3 4"><path d="M0 0v4L3 2z" fill="#2c2c2c"/></svg>
<div class="abs" style="left:59.6px;top:281.5px;width:6.6px;height:6.6px;border-radius:1.6px;background:#3a5a7c"></div><div class="abs" style="left:60.7px;top:282.6px;width:4.4px;height:4.4px;border-radius:50%;background:#5c9a2e"></div>
<svg class="abs" style="left:55.4px;top:291.2px" width="2.700" height="3.600" viewBox="0 0 3 4"><path d="M0 0v4L3 2z" fill="#2c2c2c"/></svg>
<div class="abs" style="left:59.6px;top:289.7px;width:6.6px;height:6.6px;border-radius:1.6px;background:#3a5a7c"></div><div class="abs" style="left:60.7px;top:290.8px;width:4.4px;height:4.4px;border-radius:50%;background:#5c9a2e"></div>
<svg class="abs" style="left:55.4px;top:299.4px" width="2.700" height="3.600" viewBox="0 0 3 4"><path d="M0 0v4L3 2z" fill="#2c2c2c"/></svg>
<div class="abs" style="left:59.6px;top:297.9px;width:6.6px;height:6.6px;border-radius:1.6px;background:#3a5a7c"></div><div class="abs" style="left:60.7px;top:299.1px;width:4.4px;height:4.4px;border-radius:50%;background:#5c9a2e"></div>
<svg class="abs" style="left:55.4px;top:307.7px" width="2.700" height="3.600" viewBox="0 0 3 4"><path d="M0 0v4L3 2z" fill="#2c2c2c"/></svg>
<div class="abs" style="left:59.6px;top:306.2px;width:6.6px;height:6.6px;border-radius:1.6px;background:#3a5a7c"></div><div class="abs" style="left:60.7px;top:307.3px;width:4.4px;height:4.4px;border-radius:50%;background:#5c9a2e"></div>
<svg class="abs" style="left:55.4px;top:315.9px" width="2.700" height="3.600" viewBox="0 0 3 4"><path d="M0 0v4L3 2z" fill="#2c2c2c"/></svg>
<div class="abs" style="left:59.6px;top:314.4px;width:6.6px;height:6.6px;border-radius:1.6px;background:#3a5a7c"></div><div class="abs" style="left:60.7px;top:315.5px;width:4.4px;height:4.4px;border-radius:50%;background:#5c9a2e"></div>
<svg class="abs" style="left:55.4px;top:324.1px" width="2.700" height="3.600" viewBox="0 0 3 4"><path d="M0 0v4L3 2z" fill="#2c2c2c"/></svg>
<div class="abs" style="left:59.6px;top:322.6px;width:6.6px;height:6.6px;border-radius:1.6px;background:#3a5a7c"></div><div class="abs" style="left:60.7px;top:323.7px;width:4.4px;height:4.4px;border-radius:50%;background:#5c9a2e"></div>
<svg class="abs" style="left:55.4px;top:332.3px" width="2.700" height="3.600" viewBox="0 0 3 4"><path d="M0 0v4L3 2z" fill="#2c2c2c"/></svg>
<svg class="abs" style="left:59.9px;top:331.5px" width="6" height="6" viewBox="0 0 6 6"><path d="M.3 .8h5.400M.8 1v4.500M2.400 1v4.500M4 1v4.500M5.300 1v4.500M.3 5.300h5.400" stroke="#2c2c2c" stroke-width=".9" fill="none"/></svg>
<svg class="abs" style="left:55.4px;top:340.5px" width="2.700" height="3.600" viewBox="0 0 3 4"><path d="M0 0v4L3 2z" fill="#2c2c2c"/></svg>
<svg class="abs" style="left:59.9px;top:339.7px" width="6" height="6" viewBox="0 0 6 6"><path d="M.3 .8h5.400M.8 1v4.500M2.400 1v4.500M4 1v4.500M5.300 1v4.500M.3 5.300h5.400" stroke="#2c2c2c" stroke-width=".9" fill="none"/></svg>
<svg class="abs" style="left:55.4px;top:348.7px" width="2.700" height="3.600" viewBox="0 0 3 4"><path d="M0 0v4L3 2z" fill="#2c2c2c"/></svg>
<svg class="abs" style="left:59.9px;top:347.9px" width="6" height="6" viewBox="0 0 6 6"><path d="M.3 .8h5.400M.8 1v4.500M2.400 1v4.500M4 1v4.500M5.300 1v4.500M.3 5.300h5.400" stroke="#2c2c2c" stroke-width=".9" fill="none"/></svg>
<svg class="abs" style="left:55.4px;top:356.9px" width="2.700" height="3.600" viewBox="0 0 3 4"><path d="M0 0v4L3 2z" fill="#2c2c2c"/></svg>
<svg class="abs" style="left:59.9px;top:356.1px" width="6" height="6" viewBox="0 0 6 6"><path d="M.3 .8h5.400M.8 1v4.500M2.400 1v4.500M4 1v4.500M5.300 1v4.500M.3 5.300h5.400" stroke="#2c2c2c" stroke-width=".9" fill="none"/></svg>
<svg class="abs" style="left:55.4px;top:365.1px" width="2.700" height="3.600" viewBox="0 0 3 4"><path d="M0 0v4L3 2z" fill="#2c2c2c"/></svg>
<div class="abs" style="left:59.6px;top:363.6px;width:6.6px;height:6.6px;border-radius:1.6px;background:#3a5a7c"></div><div class="abs" style="left:60.7px;top:364.7px;width:4.4px;height:4.4px;border-radius:50%;background:#5c9a2e"></div>
<svg class="abs" style="left:55.4px;top:373.3px" width="2.700" height="3.600" viewBox="0 0 3 4"><path d="M0 0v4L3 2z" fill="#2c2c2c"/></svg>
<div class="abs" style="left:59.6px;top:371.8px;width:6.6px;height:6.6px;border-radius:1.6px;background:#3a5a7c"></div><div class="abs" style="left:60.7px;top:372.9px;width:4.4px;height:4.4px;border-radius:50%;background:#5c9a2e"></div>
<svg class="abs" style="left:55.4px;top:381.5px" width="2.700" height="3.600" viewBox="0 0 3 4"><path d="M0 0v4L3 2z" fill="#2c2c2c"/></svg>
<div class="abs" style="left:59.6px;top:380.0px;width:6.6px;height:6.6px;border-radius:1.6px;background:#3a5a7c"></div><div class="abs" style="left:60.7px;top:381.1px;width:4.4px;height:4.4px;border-radius:50%;background:#5c9a2e"></div>
<svg class="abs" style="left:55.4px;top:389.7px" width="2.700" height="3.600" viewBox="0 0 3 4"><path d="M0 0v4L3 2z" fill="#2c2c2c"/></svg>
<div class="abs" style="left:59.6px;top:388.2px;width:6.6px;height:6.6px;border-radius:1.6px;background:#3a5a7c"></div><div class="abs" style="left:60.7px;top:389.3px;width:4.4px;height:4.4px;border-radius:50%;background:#5c9a2e"></div>
<svg class="abs" style="left:55.4px;top:397.9px" width="2.700" height="3.600" viewBox="0 0 3 4"><path d="M0 0v4L3 2z" fill="#2c2c2c"/></svg>
<svg class="abs" style="left:59.9px;top:397.1px" width="6" height="6" viewBox="0 0 6 6"><path d="M.3 .8h5.400M.8 1v4.500M2.400 1v4.500M4 1v4.500M5.300 1v4.500M.3 5.300h5.400" stroke="#2c2c2c" stroke-width=".9" fill="none"/></svg>
<svg class="abs" style="left:55.4px;top:406.1px" width="2.700" height="3.600" viewBox="0 0 3 4"><path d="M0 0v4L3 2z" fill="#2c2c2c"/></svg>
<div class="abs" style="left:59.6px;top:404.6px;width:6.6px;height:6.6px;border-radius:1.6px;background:#3a5a7c"></div><div class="abs" style="left:60.7px;top:405.7px;width:4.4px;height:4.4px;border-radius:50%;background:#5c9a2e"></div>
<svg class="abs" style="left:55.4px;top:414.3px" width="2.700" height="3.600" viewBox="0 0 3 4"><path d="M0 0v4L3 2z" fill="#2c2c2c"/></svg>
<svg class="abs" style="left:59.9px;top:413.5px" width="6" height="6" viewBox="0 0 6 6"><path d="M.3 .8h5.400M.8 1v4.500M2.400 1v4.500M4 1v4.500M5.300 1v4.500M.3 5.300h5.400" stroke="#2c2c2c" stroke-width=".9" fill="none"/></svg>
<svg class="abs" style="left:55.4px;top:422.5px" width="2.700" height="3.600" viewBox="0 0 3 4"><path d="M0 0v4L3 2z" fill="#2c2c2c"/></svg>
<svg class="abs" style="left:59.9px;top:421.7px" width="6" height="6" viewBox="0 0 6 6"><path d="M.3 .8h5.400M.8 1v4.500M2.400 1v4.500M4 1v4.500M5.300 1v4.500M.3 5.300h5.400" stroke="#2c2c2c" stroke-width=".9" fill="none"/></svg>
<svg class="abs" style="left:55.4px;top:430.7px" width="2.700" height="3.600" viewBox="0 0 3 4"><path d="M0 0v4L3 2z" fill="#2c2c2c"/></svg>
<svg class="abs" style="left:59.9px;top:429.9px" width="6" height="6" viewBox="0 0 6 6"><path d="M.3 .8h5.400M.8 1v4.500M2.400 1v4.500M4 1v4.500M5.300 1v4.500M.3 5.300h5.400" stroke="#2c2c2c" stroke-width=".9" fill="none"/></svg>
<svg class="abs" style="left:55.4px;top:438.9px" width="2.700" height="3.600" viewBox="0 0 3 4"><path d="M0 0v4L3 2z" fill="#2c2c2c"/></svg>
<div class="abs" style="left:59.6px;top:437.4px;width:6.6px;height:6.6px;border-radius:1.6px;background:#3a5a7c"></div><div class="abs" style="left:60.7px;top:438.5px;width:4.4px;height:4.4px;border-radius:50%;background:#5c9a2e"></div>
</div>
<div class="lay">
<div class="t tr" style='left:62.4px;top:52.20px;font-size:5.3px;line-height:6.89px;letter-spacing:0.26px;color:#1e1e1e;font-family:"DejaVu Sans Condensed","DejaVu Sans","Liberation Sans",sans-serif;'>Typo3 Units Prod</div>
<div class="t tr" style='left:69.0px;top:60.41px;font-size:5.3px;line-height:6.89px;letter-spacing:0.10px;color:#1e1e1e;font-family:"DejaVu Sans Condensed","DejaVu Sans","Liberation Sans",sans-serif;'>Default</div>
<div class="t tr" style='left:69.0px;top:68.61px;font-size:5.3px;line-height:6.89px;letter-spacing:0.16px;color:#1e1e1e;font-family:"DejaVu Sans Condensed","DejaVu Sans","Liberation Sans",sans-serif;'>Centrum Komunikacji i Marketingu</div>
<div class="t tr" style='left:75.6px;top:76.81px;font-size:5.3px;line-height:6.89px;letter-spacing:0.26px;color:#1e1e1e;font-family:"DejaVu Sans Condensed","DejaVu Sans","Liberation Sans",sans-serif;'>Patronat Rektora AGH</div>
<div class="t tr" style='left:75.6px;top:85.02px;font-size:5.3px;line-height:6.89px;letter-spacing:0.16px;color:#1e1e1e;font-family:"DejaVu Sans Condensed","DejaVu Sans","Liberation Sans",sans-serif;'>Współpraca z mediami</div>
<div class="t tr" style='left:75.6px;top:93.22px;font-size:5.3px;line-height:6.89px;letter-spacing:0.20px;color:#1e1e1e;font-family:"DejaVu Sans Condensed","DejaVu Sans","Liberation Sans",sans-serif;'>Gadżety konferencyjne</div>
<div class="t tr" style='left:82.2px;top:101.43px;font-size:5.3px;line-height:6.89px;letter-spacing:0.19px;color:#1e1e1e;font-family:"DejaVu Sans Condensed","DejaVu Sans","Liberation Sans",sans-serif;'>Zasady zamawiania materiałów</div>
<div class="t tr" style='left:75.6px;top:109.64px;font-size:5.3px;line-height:6.89px;letter-spacing:0.28px;color:#1e1e1e;font-family:"DejaVu Sans Condensed","DejaVu Sans","Liberation Sans",sans-serif;'>Kontakt</div>
<div class="t tr" style='left:75.6px;top:117.84px;font-size:5.3px;line-height:6.89px;letter-spacing:0.21px;color:#1e1e1e;font-family:"DejaVu Sans Condensed","DejaVu Sans","Liberation Sans",sans-serif;'>Kontener 4 kolumny</div>
<div class="t tr" style='left:75.6px;top:126.04px;font-size:5.3px;line-height:6.89px;letter-spacing:0.28px;color:#1e1e1e;font-family:"DejaVu Sans Condensed","DejaVu Sans","Liberation Sans",sans-serif;'>Typo3 - Szablony</div>
<div class="t tr" style='left:82.2px;top:134.25px;font-size:5.3px;line-height:6.89px;letter-spacing:0.13px;color:#1e1e1e;font-family:"DejaVu Sans Condensed","DejaVu Sans","Liberation Sans",sans-serif;'>Szablon z filmem</div>
<div class="t tr" style='left:75.6px;top:142.46px;font-size:5.3px;line-height:6.89px;letter-spacing:0.20px;color:#1e1e1e;font-family:"DejaVu Sans Condensed","DejaVu Sans","Liberation Sans",sans-serif;'>Typo3 - instrukcja</div>
<div class="t tr" style='left:82.2px;top:150.66px;font-size:5.3px;line-height:6.89px;letter-spacing:0.04px;color:#1e1e1e;font-family:"DejaVu Sans Condensed","DejaVu Sans","Liberation Sans",sans-serif;'>Logowanie</div>
<div class="t tr" style='left:82.2px;top:158.87px;font-size:5.3px;line-height:6.89px;letter-spacing:0.18px;color:#1e1e1e;font-family:"DejaVu Sans Condensed","DejaVu Sans","Liberation Sans",sans-serif;'>Kontenery</div>
<div class="t tr" style='left:82.2px;top:167.07px;font-size:5.3px;line-height:6.89px;letter-spacing:0.25px;color:#1e1e1e;font-family:"DejaVu Sans Condensed","DejaVu Sans","Liberation Sans",sans-serif;'>Tło oraz ramka</div>
<div class="t tr" style='left:82.2px;top:175.28px;font-size:5.3px;line-height:6.89px;letter-spacing:0.13px;color:#1e1e1e;font-family:"DejaVu Sans Condensed","DejaVu Sans","Liberation Sans",sans-serif;'>Graficzne przejścia pomiędzy ko</div>
<div class="t tr" style='left:82.2px;top:183.48px;font-size:5.3px;line-height:6.89px;letter-spacing:0.14px;color:#1e1e1e;font-family:"DejaVu Sans Condensed","DejaVu Sans","Liberation Sans",sans-serif;'>Grupa kart</div>
<div class="t tr" style='left:82.2px;top:191.69px;font-size:5.3px;line-height:6.89px;letter-spacing:0.25px;color:#1e1e1e;font-family:"DejaVu Sans Condensed","DejaVu Sans","Liberation Sans",sans-serif;'>Karuzela - rotator / slider / ban</div>
<div class="t tr" style='left:82.2px;top:199.89px;font-size:5.3px;line-height:6.89px;letter-spacing:0.25px;color:#1e1e1e;font-family:"DejaVu Sans Condensed","DejaVu Sans","Liberation Sans",sans-serif;'>Element wstawiający wiersze</div>
<div class="t tr" style='left:75.6px;top:208.09px;font-size:5.3px;line-height:6.89px;letter-spacing:0.17px;color:#1e1e1e;font-family:"DejaVu Sans Condensed","DejaVu Sans","Liberation Sans",sans-serif;'>Configuration</div>
<div class="t tr" style='left:69.0px;top:216.30px;font-size:5.3px;line-height:6.89px;letter-spacing:0.15px;color:#1e1e1e;font-family:"DejaVu Sans Condensed","DejaVu Sans","Liberation Sans",sans-serif;'>AGH Junior</div>
<div class="t tr" style='left:69.0px;top:224.51px;font-size:5.3px;line-height:6.89px;letter-spacing:0.13px;color:#1e1e1e;font-family:"DejaVu Sans Condensed","DejaVu Sans","Liberation Sans",sans-serif;'>Biuletyn AGH</div>
<div class="t tr" style='left:69.0px;top:232.71px;font-size:5.3px;line-height:6.89px;letter-spacing:0.19px;color:#1e1e1e;font-family:"DejaVu Sans Condensed","DejaVu Sans","Liberation Sans",sans-serif;'>Virut Akademia</div>
<div class="t tr" style='left:69.0px;top:240.91px;font-size:5.3px;line-height:6.89px;letter-spacing:0.24px;color:#1e1e1e;font-family:"DejaVu Sans Condensed","DejaVu Sans","Liberation Sans",sans-serif;'>Klub Absolwentów AGH</div>
<div class="t tr" style='left:69.0px;top:249.12px;font-size:5.3px;line-height:6.89px;letter-spacing:0.21px;color:#1e1e1e;font-family:"DejaVu Sans Condensed","DejaVu Sans","Liberation Sans",sans-serif;'>Sklub</div>
<div class="t tr" style='left:69.0px;top:257.32px;font-size:5.3px;line-height:6.89px;letter-spacing:0.10px;color:#1e1e1e;font-family:"DejaVu Sans Condensed","DejaVu Sans","Liberation Sans",sans-serif;'>Ssyie</div>
<div class="t tr" style='left:69.0px;top:265.53px;font-size:5.3px;line-height:6.89px;letter-spacing:0.23px;color:#1e1e1e;font-family:"DejaVu Sans Condensed","DejaVu Sans","Liberation Sans",sans-serif;'>Centrum Zarządzania Wdrożeniami</div>
<div class="t tr" style='left:69.0px;top:273.73px;font-size:5.3px;line-height:6.89px;letter-spacing:0.34px;color:#1e1e1e;font-family:"DejaVu Sans Condensed","DejaVu Sans","Liberation Sans",sans-serif;'>Równość</div>
<div class="t tr" style='left:69.0px;top:281.94px;font-size:5.3px;line-height:6.89px;letter-spacing:0.14px;color:#1e1e1e;font-family:"DejaVu Sans Condensed","DejaVu Sans","Liberation Sans",sans-serif;'>MBA TECH</div>
<div class="t tr" style='left:69.0px;top:290.14px;font-size:5.3px;line-height:6.89px;letter-spacing:0.17px;color:#1e1e1e;font-family:"DejaVu Sans Condensed","DejaVu Sans","Liberation Sans",sans-serif;'>Ośrodek AGH w Łukęcinie</div>
<div class="t tr" style='left:69.0px;top:298.35px;font-size:5.3px;line-height:6.89px;letter-spacing:0.17px;color:#1e1e1e;font-family:"DejaVu Sans Condensed","DejaVu Sans","Liberation Sans",sans-serif;'>IV International Conference of Castin</div>
<div class="t tr" style='left:69.0px;top:306.55px;font-size:5.3px;line-height:6.89px;letter-spacing:0.18px;color:#1e1e1e;font-family:"DejaVu Sans Condensed","DejaVu Sans","Liberation Sans",sans-serif;'>International Symposium on the Scie</div>
<div class="t tr" style='left:69.0px;top:314.76px;font-size:5.3px;line-height:6.89px;letter-spacing:0.20px;color:#1e1e1e;font-family:"DejaVu Sans Condensed","DejaVu Sans","Liberation Sans",sans-serif;'>Pol-Viet</div>
<div class="t tr" style='left:69.0px;top:322.96px;font-size:5.3px;line-height:6.89px;letter-spacing:0.18px;color:#1e1e1e;font-family:"DejaVu Sans Condensed","DejaVu Sans","Liberation Sans",sans-serif;'>Konkurs Zobaczyć Matematykę</div>
<div class="t tr" style='left:69.0px;top:331.17px;font-size:5.3px;line-height:6.89px;letter-spacing:0.22px;color:#1e1e1e;font-family:"DejaVu Sans Condensed","DejaVu Sans","Liberation Sans",sans-serif;'>Centrum Cyberbezpieczeństwa</div>
<div class="t tr" style='left:69.0px;top:339.38px;font-size:5.3px;line-height:6.89px;letter-spacing:0.51px;color:#1e1e1e;font-family:"DejaVu Sans Condensed","DejaVu Sans","Liberation Sans",sans-serif;'>wzSIlat</div>
<div class="t tr" style='left:69.0px;top:347.58px;font-size:5.3px;line-height:6.89px;letter-spacing:0.16px;color:#1e1e1e;font-family:"DejaVu Sans Condensed","DejaVu Sans","Liberation Sans",sans-serif;'>Centrum Technologii Kosmicznych</div>
<div class="t tr" style='left:69.0px;top:355.78px;font-size:5.3px;line-height:6.89px;letter-spacing:0.17px;color:#1e1e1e;font-family:"DejaVu Sans Condensed","DejaVu Sans","Liberation Sans",sans-serif;'>UNIVERSEH</div>
<div class="t tr" style='left:69.0px;top:363.99px;font-size:5.3px;line-height:6.89px;letter-spacing:0.16px;color:#1e1e1e;font-family:"DejaVu Sans Condensed","DejaVu Sans","Liberation Sans",sans-serif;'>Akademicka Sieć Kosmiczna</div>
<div class="t tr" style='left:69.0px;top:372.19px;font-size:5.3px;line-height:6.89px;letter-spacing:0.16px;color:#1e1e1e;font-family:"DejaVu Sans Condensed","DejaVu Sans","Liberation Sans",sans-serif;'>Exploring the Frontiers of Technology</div>
<div class="t tr" style='left:69.0px;top:380.40px;font-size:5.3px;line-height:6.89px;letter-spacing:0.03px;color:#1e1e1e;font-family:"DejaVu Sans Condensed","DejaVu Sans","Liberation Sans",sans-serif;'>75-lecie Wydziału Inżynierii Materiałow</div>
<div class="t tr" style='left:69.0px;top:388.61px;font-size:5.3px;line-height:6.89px;letter-spacing:0.20px;color:#1e1e1e;font-family:"DejaVu Sans Condensed","DejaVu Sans","Liberation Sans",sans-serif;'>Związek Nauczycielstwa Polskiego</div>
<div class="t tr" style='left:69.0px;top:396.81px;font-size:5.3px;line-height:6.89px;letter-spacing:0.21px;color:#1e1e1e;font-family:"DejaVu Sans Condensed","DejaVu Sans","Liberation Sans",sans-serif;'>Szkoła Doktorska AGH</div>
<div class="t tr" style='left:69.0px;top:405.01px;font-size:5.3px;line-height:6.89px;letter-spacing:0.21px;color:#1e1e1e;font-family:"DejaVu Sans Condensed","DejaVu Sans","Liberation Sans",sans-serif;'>Centrum Obsługi Projektów</div>
<div class="t tr" style='left:69.0px;top:413.22px;font-size:5.3px;line-height:6.89px;letter-spacing:0.20px;color:#1e1e1e;font-family:"DejaVu Sans Condensed","DejaVu Sans","Liberation Sans",sans-serif;'>Dział Studentów Zagranicznych</div>
<div class="t tr" style='left:69.0px;top:421.43px;font-size:5.3px;line-height:6.89px;letter-spacing:0.19px;color:#1e1e1e;font-family:"DejaVu Sans Condensed","DejaVu Sans","Liberation Sans",sans-serif;'>Centrum Energetyki</div>
<div class="t tr" style='left:69.0px;top:429.63px;font-size:5.3px;line-height:6.89px;letter-spacing:0.14px;color:#1e1e1e;font-family:"DejaVu Sans Condensed","DejaVu Sans","Liberation Sans",sans-serif;'>Dział Spraw Studenckich</div>
<div class="t tr" style='left:69.0px;top:437.83px;font-size:5.3px;line-height:6.89px;letter-spacing:0.21px;color:#1e1e1e;font-family:"DejaVu Sans Condensed","DejaVu Sans","Liberation Sans",sans-serif;'>Centrum Spraw Pracowniczych</div>
</div>

<div class="lay blurI" style="opacity:.9">
<div class="btn" style="left:181.2px;top:32px;width:32.3px;height:7.600px"></div><div class="btn" style="left:218.7px;top:32px;width:28.0px;height:7.600px"></div><div class="btn" style="left:252.0px;top:32px;width:26.5px;height:7.600px"></div><div class="btn" style="left:284.2px;top:32px;width:26.3px;height:7.600px"></div><div class="btn" style="left:315.7px;top:32px;width:24.8px;height:7.600px"></div>
<svg class="abs" style="left:186.200px;top:35.200px" width="4" height="4" viewBox="0 0 4 4"><path d="M.4 .4l3.200 3.200M3.600 .4L.4 3.600" stroke="#222" stroke-width=".9"/></svg>
<svg class="abs" style="left:222.200px;top:34.400px" width="5" height="6" viewBox="0 0 5 6"><path d="M.4 .4h3.400l.8.8v4.400H.4z" fill="none" stroke="#2a2a2a" stroke-width=".8"/><path d="M1.400 3.400h2.200v2.200H1.400z" fill="#2a2a2a"/></svg>
<svg class="abs" style="left:255.600px;top:34.800px" width="6" height="5" viewBox="0 0 6 5"><path d="M.3 2.500C1.400.6 4.600.6 5.700 2.500 4.600 4.400 1.400 4.400.3 2.500z" fill="#2a2a2a"/><circle cx="3" cy="2.500" r=".9" fill="#777"/></svg>
<svg class="abs" style="left:288.600px;top:35px" width="5" height="5" viewBox="0 0 5 5"><path d="M2.500 .2v4.600M.2 2.500h4.600" stroke="#222" stroke-width="1"/></svg>
<svg class="abs" style="left:320px;top:34.200px" width="5" height="6" viewBox="0 0 5 6"><path d="M.2 1.200h4.600M1.700 .4h1.600" stroke="#2a2a2a" stroke-width=".7"/><path d="M.9 1.800h3.200v3.800H.9z" fill="none" stroke="#2a2a2a" stroke-width=".8"/></svg>
<svg class="abs" style="left:708px;top:22px" width="7" height="7" viewBox="0 0 7 7"><path d="M.5 .4h2.400l1.300 1.300v4.300H.5z" fill="#828282" stroke="#6a6a6a" stroke-width=".3"/><circle cx="4.250" cy="4" r="2.250" fill="#8a1c24"/><circle cx="4.250" cy="4" r=".6" fill="#b06a6a"/></svg>
</div>
<div class="lay" style="opacity:.75">
<div class="btn" style="left:181.2px;top:32px;width:32.3px;height:7.600px"></div><div class="btn" style="left:218.7px;top:32px;width:28.0px;height:7.600px"></div><div class="btn" style="left:252.0px;top:32px;width:26.5px;height:7.600px"></div><div class="btn" style="left:284.2px;top:32px;width:26.3px;height:7.600px"></div><div class="btn" style="left:315.7px;top:32px;width:24.8px;height:7.600px"></div>
<svg class="abs" style="left:186.200px;top:35.200px" width="4" height="4" viewBox="0 0 4 4"><path d="M.4 .4l3.200 3.200M3.600 .4L.4 3.600" stroke="#222" stroke-width=".9"/></svg>
<svg class="abs" style="left:222.200px;top:34.400px" width="5" height="6" viewBox="0 0 5 6"><path d="M.4 .4h3.400l.8.8v4.400H.4z" fill="none" stroke="#2a2a2a" stroke-width=".8"/><path d="M1.400 3.400h2.200v2.200H1.400z" fill="#2a2a2a"/></svg>
<svg class="abs" style="left:255.600px;top:34.800px" width="6" height="5" viewBox="0 0 6 5"><path d="M.3 2.500C1.400.6 4.600.6 5.700 2.500 4.600 4.400 1.400 4.400.3 2.500z" fill="#2a2a2a"/><circle cx="3" cy="2.500" r=".9" fill="#777"/></svg>
<svg class="abs" style="left:288.600px;top:35px" width="5" height="5" viewBox="0 0 5 5"><path d="M2.500 .2v4.600M.2 2.500h4.600" stroke="#222" stroke-width="1"/></svg>
<svg class="abs" style="left:320px;top:34.200px" width="5" height="6" viewBox="0 0 5 6"><path d="M.2 1.200h4.600M1.700 .4h1.600" stroke="#2a2a2a" stroke-width=".7"/><path d="M.9 1.800h3.200v3.800H.9z" fill="none" stroke="#2a2a2a" stroke-width=".8"/></svg>
<svg class="abs" style="left:708px;top:22px" width="7" height="7" viewBox="0 0 7 7"><path d="M.5 .4h2.400l1.300 1.300v4.300H.5z" fill="#828282" stroke="#6a6a6a" stroke-width=".3"/><circle cx="4.250" cy="4" r="2.250" fill="#8a1c24"/><circle cx="4.250" cy="4" r=".6" fill="#b06a6a"/></svg>
</div>
<div class="lay">
<div class="t b0" style='left:548.7px;top:22.00px;font-size:5.5px;line-height:7.15px;letter-spacing:0.13px;color:#1d1d1d;font-family:"DejaVu Sans Condensed","DejaVu Sans","Liberation Sans",sans-serif;'>Ścieżka:</div>
<div class="t b0" style='left:571.7px;top:22.00px;font-size:5.5px;line-height:7.15px;letter-spacing:0.07px;color:#1d1d1d;font-family:"DejaVu Sans Condensed","DejaVu Sans","Liberation Sans",sans-serif;text-decoration:underline;text-decoration-thickness:.5px;text-underline-offset:.8px;'>...ntrum Komunikacji i Marketingu/Typo3 - instrukcja/</div>
<div class="t b0" style='left:716.8px;top:22.00px;font-size:5.5px;line-height:7.15px;letter-spacing:0.11px;color:#1d1d1d;font-weight:bold;font-family:"DejaVu Sans Condensed","DejaVu Sans","Liberation Sans",sans-serif;'>T</div>
<div class="t b0" style='left:193.0px;top:34.00px;font-size:5.2px;line-height:6.76px;letter-spacing:0.02px;color:#262626;font-family:"DejaVu Sans Condensed","DejaVu Sans","Liberation Sans",sans-serif;'>Zamknij</div>
<div class="t b0" style='left:230.5px;top:34.00px;font-size:5.2px;line-height:6.76px;letter-spacing:-0.04px;color:#262626;font-family:"DejaVu Sans Condensed","DejaVu Sans","Liberation Sans",sans-serif;'>Zapisz</div>
<div class="t b0" style='left:263.6px;top:34.00px;font-size:5.2px;line-height:6.76px;letter-spacing:0.12px;color:#262626;font-family:"DejaVu Sans Condensed","DejaVu Sans","Liberation Sans",sans-serif;'>Pokaż</div>
<div class="t b0" style='left:295.8px;top:34.00px;font-size:5.2px;line-height:6.76px;letter-spacing:0.09px;color:#262626;font-family:"DejaVu Sans Condensed","DejaVu Sans","Liberation Sans",sans-serif;'>Nowy</div>
<div class="t b0" style='left:327.2px;top:34.00px;font-size:5.2px;line-height:6.76px;letter-spacing:0.18px;color:#262626;font-family:"DejaVu Sans Condensed","DejaVu Sans","Liberation Sans",sans-serif;'>Usuń</div>
</div>

<!-- highlighted white panel -->
<div class="abs" style="left:170.200px;top:43.800px;width:549px;height:397px;background:#444"></div>
<div class="abs" style="left:171px;top:44.700px;width:547.800px;height:395.500px;background:#fff"></div>
<div class="abs" style="left:170.800px;top:440.200px;width:549.200px;height:1.200px;background:#555"></div>
<!-- tab bar -->
<div class="abs" style="left:181px;top:76.200px;width:537px;height:12.200px;background:#ececec"></div>
<div class="abs" style="left:211.600px;top:76.200px;width:28.800px;height:12.600px;background:#fbfbfb"></div>
<div class="abs" style="left:210.800px;top:76.200px;width:.6px;height:12px;background:#d4d4d4"></div>
<div class="abs" style="left:240.400px;top:76.200px;width:.6px;height:12px;background:#d4d4d4"></div>
<!-- tab panel -->
<div class="abs" style="left:181px;top:88.400px;width:536.400px;height:125px;background:#fafafa;border-left:.6px solid #d2d2d2"></div>
<div class="abs" style="left:240.800px;top:88.200px;width:477.200px;height:.7px;background:#d6d6d6"></div>
<div class="abs" style="left:181px;top:88.200px;width:30px;height:.7px;background:#d6d6d6"></div>
<div class="abs" style="left:181px;top:171px;width:537px;height:.8px;background:#d6d6d6"></div>
<div class="abs" style="left:181px;top:213.200px;width:537px;height:.7px;background:#dadada"></div>
<div class="abs" style="left:714.200px;top:218.400px;width:4.600px;height:5px;background:#e6e6e6;border-top:1.200px solid #5a5a5a"></div>
<div class="abs" style="left:718.900px;top:44px;width:1.100px;height:397.400px;background:#585858"></div>
<div class="sel" style="left:186.3px;top:118.2px;width:43.4px;height:11.2px"></div><svg class="abs" style="left:221.2px;top:123.2px" width="5" height="4" viewBox="0 0 5 4"><path d="M.5 .7L2.5 2.800 4.500 .7" stroke="#1c1c1c" stroke-width="1.200" fill="none"/></svg><div class="sel wh" style="left:335.9px;top:118.2px;width:43.6px;height:11.2px"></div><svg class="abs" style="left:371.0px;top:123.2px" width="5" height="4" viewBox="0 0 5 4"><path d="M.5 .7L2.5 2.800 4.500 .7" stroke="#1c1c1c" stroke-width="1.200" fill="none"/></svg><div class="sel wh" style="left:484.2px;top:118.2px;width:49.9px;height:11.2px"></div><svg class="abs" style="left:525.6px;top:123.2px" width="5" height="4" viewBox="0 0 5 4"><path d="M.5 .7L2.5 2.800 4.500 .7" stroke="#1c1c1c" stroke-width="1.200" fill="none"/></svg><div class="sel wh" style="left:633.3px;top:118.2px;width:50.4px;height:11.2px"></div><svg class="abs" style="left:675.2px;top:123.2px" width="5" height="4" viewBox="0 0 5 4"><path d="M.5 .7L2.5 2.800 4.500 .7" stroke="#1c1c1c" stroke-width="1.200" fill="none"/></svg>
<div class="t" style='left:186.3px;top:79.00px;font-size:5.4px;line-height:7.02px;letter-spacing:0.28px;color:#2e2e2e;font-family:"DejaVu Sans Condensed","DejaVu Sans","Liberation Sans",sans-serif;'>Ogólne</div>
<div class="t" style='left:216.7px;top:79.00px;font-size:5.4px;line-height:7.02px;letter-spacing:0.21px;color:#666;font-family:"DejaVu Sans Condensed","DejaVu Sans","Liberation Sans",sans-serif;'>Wygląd</div>
<div class="t" style='left:247.1px;top:79.00px;font-size:5.4px;line-height:7.02px;letter-spacing:0.31px;color:#2e2e2e;font-family:"DejaVu Sans Condensed","DejaVu Sans","Liberation Sans",sans-serif;'>Język</div>
<div class="t" style='left:272.5px;top:79.00px;font-size:5.4px;line-height:7.02px;letter-spacing:0.36px;color:#2e2e2e;font-family:"DejaVu Sans Condensed","DejaVu Sans","Liberation Sans",sans-serif;'>Dostęp</div>
<div class="t" style='left:302.3px;top:79.00px;font-size:5.4px;line-height:7.02px;letter-spacing:0.19px;color:#2e2e2e;font-family:"DejaVu Sans Condensed","DejaVu Sans","Liberation Sans",sans-serif;'>Notatki</div>
<div class="t" style='left:186.6px;top:94.60px;font-size:6.07px;line-height:7.89px;letter-spacing:0.00px;color:#1c1c1c;'>Wygląd elementu zawartości</div>
<div class="t" style='left:186.6px;top:106.60px;font-size:5.3px;line-height:6.89px;letter-spacing:-0.01px;color:#0c0c0c;font-weight:bold;font-family:"DejaVu Sans Condensed","DejaVu Sans","Liberation Sans",sans-serif;'>Układ</div>
<div class="t" style='left:336.0px;top:106.60px;font-size:5.3px;line-height:6.89px;letter-spacing:-0.06px;color:#0c0c0c;font-weight:bold;font-family:"DejaVu Sans Condensed","DejaVu Sans","Liberation Sans",sans-serif;'>Ramka</div>
<div class="t" style='left:484.7px;top:106.60px;font-size:5.3px;line-height:6.89px;letter-spacing:0.05px;color:#0c0c0c;font-weight:bold;font-family:"DejaVu Sans Condensed","DejaVu Sans","Liberation Sans",sans-serif;'>Przestrzeń przed</div>
<div class="t" style='left:633.7px;top:106.60px;font-size:5.3px;line-height:6.89px;letter-spacing:0.06px;color:#0c0c0c;font-weight:bold;font-family:"DejaVu Sans Condensed","DejaVu Sans","Liberation Sans",sans-serif;'>Przestrzeń po</div>
<div class="t" style='left:190.5px;top:121.90px;font-size:5.4px;line-height:7.02px;letter-spacing:0.00px;color:#2a2a2a;font-family:"DejaVu Sans Condensed","DejaVu Sans","Liberation Sans",sans-serif;'>Domyślnie</div>
<div class="t" style='left:340.2px;top:121.90px;font-size:5.4px;line-height:7.02px;letter-spacing:0.00px;color:#2a2a2a;font-family:"DejaVu Sans Condensed","DejaVu Sans","Liberation Sans",sans-serif;'>Domyślnie</div>
<div class="t" style='left:488.6px;top:121.90px;font-size:5.4px;line-height:7.02px;letter-spacing:0.03px;color:#2a2a2a;font-family:"DejaVu Sans Condensed","DejaVu Sans","Liberation Sans",sans-serif;'>Brak</div>
<div class="t" style='left:637.6px;top:121.90px;font-size:5.4px;line-height:7.02px;letter-spacing:0.03px;color:#2a2a2a;font-family:"DejaVu Sans Condensed","DejaVu Sans","Liberation Sans",sans-serif;'>Brak</div>
<div class="t" style='left:186.5px;top:138.90px;font-size:5.3px;line-height:6.89px;letter-spacing:-0.10px;color:#0c0c0c;font-weight:bold;font-family:"DejaVu Sans Condensed","DejaVu Sans","Liberation Sans",sans-serif;'>Kolor tła</div>
<div class="t ttl" style='left:181.9px;top:53.00px;font-size:10.9px;line-height:14.17px;letter-spacing:0.00px;color:#111;font-family:"Liberation Sans","DejaVu Sans",sans-serif;-webkit-text-stroke:.55px #111;transform:scaleX(0.9387);transform-origin:0 0;'>Edytuję</div>
<div class="t ttl" style='left:232.4px;top:53.00px;font-size:10.9px;line-height:14.17px;letter-spacing:0.00px;color:#111;font-family:"Liberation Sans","DejaVu Sans",sans-serif;-webkit-text-stroke:.55px #111;transform:scaleX(0.8514);transform-origin:0 0;'>treść</div>
<div class="t ttl" style='left:255.8px;top:53.00px;font-size:10.9px;line-height:14.17px;letter-spacing:0.00px;color:#111;font-family:"Liberation Sans","DejaVu Sans",sans-serif;-webkit-text-stroke:.55px #111;transform:scaleX(0.9268);transform-origin:0 0;'>strony</div>
<div class="t ttl" style='left:286.1px;top:53.00px;font-size:10.9px;line-height:14.17px;letter-spacing:0.00px;color:#111;font-family:"Liberation Sans","DejaVu Sans",sans-serif;-webkit-text-stroke:.55px #111;transform:scaleX(0.8082);transform-origin:0 0;'>na</div>
<div class="t ttl" style='left:299.8px;top:53.00px;font-size:10.9px;line-height:14.17px;letter-spacing:0.00px;color:#111;font-family:"Liberation Sans","DejaVu Sans",sans-serif;-webkit-text-stroke:.55px #111;transform:scaleX(0.9449);transform-origin:0 0;'>stronie</div>
<div class="t ttl" style='left:334.2px;top:53.00px;font-size:10.9px;line-height:14.17px;letter-spacing:0.00px;color:#111;font-family:"Liberation Sans","DejaVu Sans",sans-serif;-webkit-text-stroke:.55px #111;transform:scaleX(0.9632);transform-origin:0 0;'>"Tło</div>
<div class="t ttl" style='left:355.8px;top:53.00px;font-size:10.9px;line-height:14.17px;letter-spacing:0.00px;color:#111;font-family:"Liberation Sans","DejaVu Sans",sans-serif;-webkit-text-stroke:.55px #111;transform:scaleX(0.8684);transform-origin:0 0;'>oraz</div>
<div class="t ttl" style='left:378.0px;top:53.00px;font-size:10.9px;line-height:14.17px;letter-spacing:0.00px;color:#111;font-family:"Liberation Sans","DejaVu Sans",sans-serif;-webkit-text-stroke:.55px #111;transform:scaleX(0.9817);transform-origin:0 0;'>ramka"</div>
<div class="t under" style='left:196.8px;top:189.20px;font-size:5.3px;line-height:6.89px;letter-spacing:-0.22px;color:#0c0c0c;font-weight:bold;font-family:"DejaVu Sans Condensed","DejaVu Sans","Liberation Sans",sans-serif;'>Odnośnik do menu</div>
<div class="sel foc" style="left:186.2px;top:149.8px;width:53.0px;height:11.7px"></div><svg class="abs" style="left:230.7px;top:155.1px" width="5" height="4" viewBox="0 0 5 4"><path d="M.5 .7L2.5 2.800 4.500 .7" stroke="#1c1c1c" stroke-width="1.200" fill="none"/></svg>
<div class="t foc" style='left:190.5px;top:153.80px;font-size:5.4px;line-height:7.02px;letter-spacing:0.13px;color:#2a2a2a;font-family:"DejaVu Sans Condensed","DejaVu Sans","Liberation Sans",sans-serif;'>Brak</div>
<!-- dropdown -->
<div class="abs" style="left:186.600px;top:163.900px;width:52.300px;height:67.800px;background:#fff;border:.8px solid #9a9a9a;border-radius:.5px;box-shadow:0 .5px 1px rgba(0,0,0,.1)"></div>
<div class="abs" style="left:188.800px;top:165.600px;width:49.600px;height:8.600px;background:#d9d9dd"></div>
<div class="t dd" style='left:190.8px;top:167.20px;font-size:5.4px;line-height:7.02px;letter-spacing:0.16px;color:#1e1e1e;font-family:"DejaVu Sans Condensed","DejaVu Sans","Liberation Sans",sans-serif;'>Brak</div>
<div class="t dd" style='left:190.8px;top:176.60px;font-size:5.4px;line-height:7.02px;letter-spacing:0.14px;color:#1e1e1e;font-family:"DejaVu Sans Condensed","DejaVu Sans","Liberation Sans",sans-serif;'>Tematyczny 1</div>
<div class="t dd" style='left:190.8px;top:186.00px;font-size:5.4px;line-height:7.02px;letter-spacing:0.14px;color:#1e1e1e;font-family:"DejaVu Sans Condensed","DejaVu Sans","Liberation Sans",sans-serif;'>Tematyczny 2</div>
<div class="t dd" style='left:190.8px;top:195.40px;font-size:5.4px;line-height:7.02px;letter-spacing:0.25px;color:#1e1e1e;font-family:"DejaVu Sans Condensed","DejaVu Sans","Liberation Sans",sans-serif;'>Czarny</div>
<div class="t dd" style='left:190.8px;top:204.80px;font-size:5.4px;line-height:7.02px;letter-spacing:0.10px;color:#1e1e1e;font-family:"DejaVu Sans Condensed","DejaVu Sans","Liberation Sans",sans-serif;'>Szary ciemny</div>
<div class="t dd" style='left:190.8px;top:214.20px;font-size:5.4px;line-height:7.02px;letter-spacing:0.23px;color:#1e1e1e;font-family:"DejaVu Sans Condensed","DejaVu Sans","Liberation Sans",sans-serif;'>Szary jasny</div>
<div class="t dd" style='left:190.8px;top:223.60px;font-size:5.4px;line-height:7.02px;letter-spacing:0.05px;color:#1e1e1e;font-family:"DejaVu Sans Condensed","DejaVu Sans","Liberation Sans",sans-serif;'>Biały</div>
<div class="circ" style="left:213.0px;top:53.4px;width:21.30px;height:21.30px;border-width:1.35px"></div><div class="circ" style="left:310.0px;top:111.9px;width:21.30px;height:21.30px;border-width:1.35px"></div><div class="circ" style="left:161.1px;top:144.9px;width:21.30px;height:21.30px;border-width:1.35px"></div>
<div class="t num" style='left:221.3px;top:57.60px;font-size:12.9px;line-height:16.77px;letter-spacing:0.03px;color:#cb0c11;font-weight:bold;font-family:"Liberation Sans","DejaVu Sans",sans-serif;-webkit-text-stroke:.3px #cb0c11;'>1</div>
<div class="t num" style='left:318.2px;top:116.80px;font-size:12.9px;line-height:16.77px;letter-spacing:0.03px;color:#cb0c11;font-weight:bold;font-family:"Liberation Sans","DejaVu Sans",sans-serif;-webkit-text-stroke:.3px #cb0c11;'>2</div>
<div class="t num" style='left:169.5px;top:149.60px;font-size:12.9px;line-height:16.77px;letter-spacing:0.03px;color:#cb0c11;font-weight:bold;font-family:"Liberation Sans","DejaVu Sans",sans-serif;-webkit-text-stroke:.3px #cb0c11;'>3</div>
</body></html>
